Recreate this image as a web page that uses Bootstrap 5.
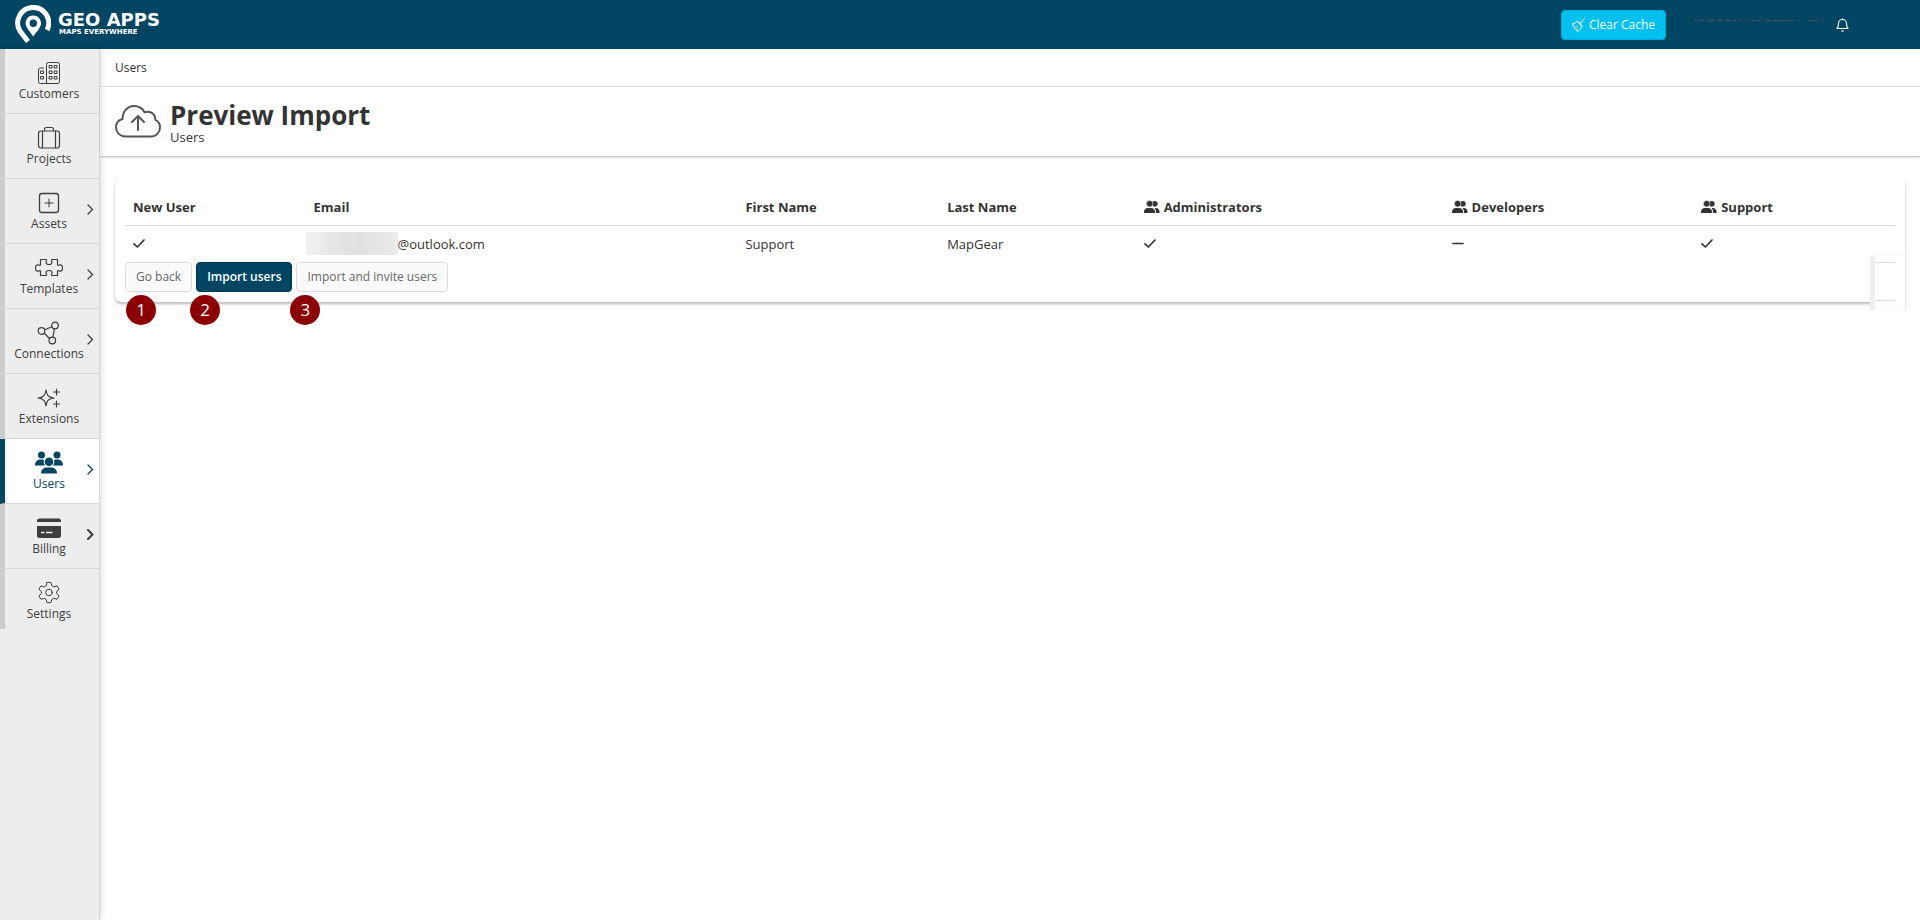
<!DOCTYPE html>
<html lang="en">
<head>
<meta charset="utf-8">
<meta name="viewport" content="width=device-width, initial-scale=1">
<title>Preview Import - Geo Apps</title>
<link href="https://cdn.jsdelivr.net/npm/bootstrap@5.3.0/dist/css/bootstrap.min.css" rel="stylesheet">
<style>
  body { font-family: "Open Sans", sans-serif; font-size: 13px; line-height: 18px; color: #333; background: #fff; }
  svg { display: block; flex: none; }
  .stroke { fill: none; stroke: currentColor; stroke-linecap: round; stroke-linejoin: round; }
  .topbar { height: 49px; background: #004663; color: #fff; padding: 0 71px 0 15px; }
  .brand-link { gap: 7px; }
  .brand-text { font-family: "DejaVu Sans", sans-serif; font-weight: 700; font-size: 18px; line-height: 17px; padding-bottom: 2px; }
  .brand-text small { display: block; font-size: 7px; line-height: 8px; padding-left: 1px; }
  .btn { font-size: 12px; line-height: 18px; padding: 5px 10px; border-radius: 4px; }
  .btn-cache { height: 30px; color: #fff; background: #00c0ef; border-color: #00acd6; font-weight: 500; }
  .btn-cache:hover { color: #fff; background: #00acd6; }
  .bell { color: #fff; padding: 0; border: 0; }
  .sidebar { width: 100px; background: #ededed; border-right: 1px solid #d6d6d6; box-shadow: 1px 0 6px rgba(0,0,0,.15); flex: none; }
  .side-link { height: 65px; border-left: 5px solid #ccc; border-bottom: 1px solid #d6d6d6; padding: 10px 6px 0 0; color: #3d3d3d; font-size: 12px; text-decoration: none; position: relative; }
  .side-link:last-child { border-bottom: 0; height: 60px; }
  .side-link.active { background: #fff; border-left-color: #004663; color: #004663; }
  .chev { position: absolute; right: 5px; top: 24px; }
  .page-shell { min-height: calc(100vh - 49px); }
  .crumbs { height: 38px; padding: 0 15px; border-bottom: 1px solid #dcdcdc; }
  .crumbs a { color: #333; text-decoration: none; font-size: 12px; }
  .page-head { height: 70px; padding: 0 15px; border-bottom: 1px solid #c4c4c4; box-shadow: 0 1px 2px rgba(0,0,0,.12); gap: 9px; }
  .page-head h1 { font-size: 26px; line-height: 30px; font-weight: 700; margin: 0; }
  .page-head p { font-size: 13px; line-height: 14px; margin: 0; }
  .import-panel { position: relative; margin: 20px 15px 0; padding: 12px 10px 10px; border-radius: 6px; background: #fff; box-shadow: 0 2px 3px rgba(0,0,0,.28); }
  .preview-table { table-layout: fixed; margin: 0; --bs-table-bg: transparent; color: #333; }
  .preview-table > thead th { height: 36px; padding: 0 8px; vertical-align: middle; font-weight: 700; border-bottom: 1px solid #d8d8d8; }
  .preview-table > tbody td { height: 37px; padding: 0 8px; vertical-align: middle; border: 0; color: #333; }
  .masked { width: 92px; height: 23px; margin-left: -8px; background: linear-gradient(90deg, #f2f2f2, #e3e3e3 35%, #e0e0e0 60%, #ececec); }
  .btn-plain { color: #666; background: #fafafa; border-color: #dcdcdc; }
  .btn-main { color: #fff; background: #004663; border-color: #00364d; font-weight: 600; }
  .btn-main:hover { color: #fff; background: #00364d; }
  .step { position: absolute; top: 33px; width: 30px; height: 30px; border-radius: 50%; background: #8b0000; color: #fff; font-size: 17px; line-height: 29px; text-align: center; z-index: 2; }
  .step-in { left: 1px; }
  .step-out { left: -6px; }
  .panel-edge { position: absolute; right: 0; top: 79px; width: 35px; height: 54px; background: #fff; border-left: 5px solid #eee; box-shadow: 1px 0 1px #e4e4e4; padding: 6px 10px 9px 0; }
  .panel-edge span { display: block; height: 39px; border: 1px solid #dcdcdc; border-width: 1px 0; }
</style>
</head>
<body>
<svg class="d-none" aria-hidden="true">
  <symbol id="people" viewBox="0 0 17 14"><g fill="currentColor"><circle cx="11.5" cy="3.6" r="3"/><circle cx="6" cy="3.5" r="3.5" stroke="#fff" stroke-width=".6"/><path d="M0 13.3V12c0-2.400 2-4 4-4h3.500c2.200 0 4.200 1.600 4.200 4v1.300zM11 8h1.500c2.400 0 4 1.700 4 4v1.300h-3.800V12c0-1.600-.6-3-1.700-4z"/></g></symbol>
  <symbol id="tick" viewBox="0 0 12 12"><path class="stroke" stroke-width="1.7" d="M1 5.800 4.300 9 11 2"/></symbol>
  <symbol id="arrow" viewBox="0 0 7 13"><path class="stroke" d="m1 2 4.500 4.500L1 11"/></symbol>
</svg>

<header class="topbar d-flex align-items-center">
  <a href="#" class="brand-link d-flex align-items-center text-white text-decoration-none me-auto" aria-label="Geo Apps">
    <svg width="36" height="40" viewBox="0 0 36 40"><path d="M13 36.500 5 26A15.500 15.500 0 1 1 32 25" fill="none" stroke="#fff" stroke-width="5"/><path fill="#fff" d="M18.300 10.500c-4.500 0-7.700 3.500-7.700 7.700 0 4.500 4.500 8.300 7.700 13.300 3.200-5 7.700-8.800 7.700-13.300 0-4.200-3.200-7.700-7.700-7.700zm0 4a3.700 3.700 0 1 1 0 7.400 3.700 3.700 0 0 1 0-7.400z"/></svg>
    <span class="brand-text">GEO APPS<small>MAPS EVERYWHERE</small></span>
  </a>
  <button type="button" class="btn btn-cache d-flex align-items-center gap-1">
    <svg width="13" height="14" viewBox="0 0 13 14"><path class="stroke" d="M12.500.7 8.700 4.700M5 3.200l5 5.200M5 3.200C3.700 4.900 2.300 5.600.7 5.700c.3 3.400 2.600 6.600 5.400 7.600 2-1.300 3.300-2.800 3.900-4.900M6.200 4.400c1-1.300 3.500.9 2.800 2.900M2.500 9.500 5 8.300M4.300 11.700l1.900-1.900"/></svg>
    Clear Cache
  </button>
  <svg class="ms-4 me-2" width="138" height="10" viewBox="0 0 138 10" aria-hidden="true"><path d="M4 .5h130" stroke="#5f4b5d" stroke-dasharray="5 2 2 6 5 3 6 3 5 3 2 4 2 9"/></svg>
  <button type="button" class="btn bell" aria-label="Notifications"><svg width="13" height="14" viewBox="0 0 13 14"><path class="stroke" stroke-width="1.100" d="M1 10.500h11c-1.500-1.300-1.500-2.500-1.500-5a4 4 0 0 0-8 0c0 2.500 0 3.700-1.500 5zM5.500 13h2M6.500 1.500V.7"/></svg></button>
</header>

<div class="page-shell d-flex">
  <nav class="sidebar" aria-label="Main">
    <a href="#" class="side-link d-flex flex-column align-items-center">
      <svg width="28" height="26" viewBox="0 0 28 26"><g class="stroke"><path d="M11.500 24.500V5.500q0-2 2-2h9q2 0 2 2v17q0 2-2 2h-17q-2 0-2-2V11q0-2 2-2h3"/><path d="M14.500 6.500h2.500V9h-2.500zM19.500 6.500H22V9h-2.500zM14.500 12h2.500v2.500h-2.500zM19.500 12H22v2.500h-2.500zM14.500 17.500h2.500V20h-2.500zM19.500 17.500H22V20h-2.500zM6 12h2.500v2.500H6zM6 17.500h2.500V20H6z"/></g></svg>Customers</a>
    <a href="#" class="side-link d-flex flex-column align-items-center">
      <svg width="28" height="26" viewBox="0 0 28 26"><path class="stroke" stroke-width="1.200" d="M6 7h16q2.500 0 2.500 2.500v12q0 2.500-2.500 2.500H6q-2.500 0-2.500-2.500v-12Q3.500 7 6 7zM7.500 7v17M20.500 7v17M9.500 7V5.500q0-2 2-2h5q2 0 2 2V7"/></svg>Projects</a>
    <a href="#" class="side-link d-flex flex-column align-items-center">
      <svg width="28" height="26" viewBox="0 0 28 26"><g class="stroke"><rect x="4.500" y="4.500" width="19" height="19" rx="2.500" stroke-width="1.300"/><path d="M14 10v8M10 14h8"/></g></svg>Assets<svg class="chev" width="7" height="13" stroke-width="1.300"><use href="#arrow"/></svg></a>
    <a href="#" class="side-link d-flex flex-column align-items-center">
      <svg width="28" height="26" viewBox="0 0 28 26"><path class="stroke" stroke-width="1.200" d="M5.500 5.500h5.300c1 0 1 1 .5 1.700-1 1.800.5 3.300 2.700 3.300s3.700-1.500 2.700-3.300c-.5-.7-.5-1.700.5-1.700h5.300v5c0 1 1 1.100 1.700.6 1.800-1 3.300.6 3.300 2.900s-1.500 3.900-3.300 2.900c-.7-.5-1.700-.4-1.700.6v4h-5.300c-1 0-1-1-.5-1.700 1-1.800-.5-3.300-2.700-3.300s-3.700 1.500-2.700 3.300c.5.700.5 1.700-.5 1.700H5.500v-4c0-1-1-1.100-1.700-.6C2 17.900.5 16.300.5 14s1.500-3.900 3.300-2.900c.7.500 1.700.4 1.700-.6z"/></svg>Templates<svg class="chev" width="7" height="13" stroke-width="1.300"><use href="#arrow"/></svg></a>
    <a href="#" class="side-link d-flex flex-column align-items-center">
      <svg width="28" height="26" viewBox="0 0 28 26"><g class="stroke" stroke-width="1.200"><circle cx="6.500" cy="12" r="3.300"/><circle cx="20" cy="6.500" r="3.300"/><circle cx="17.300" cy="21.500" r="3.300"/><path d="m9.700 10.700 7.200-2.900M9.200 14l5.300 5.500M19.400 9.900l-1.500 8.300"/></g></svg>Connections<svg class="chev" width="7" height="13" stroke-width="1.300"><use href="#arrow"/></svg></a>
    <a href="#" class="side-link d-flex flex-column align-items-center">
      <svg width="28" height="26" viewBox="0 0 28 26"><path class="stroke" stroke-width="1.200" d="M11 6q.9 5.200 2.600 6Q15 13.600 19 14q-4 .4-5.400 2-1.700.8-2.600 6-.9-5.200-2.600-6Q7 14.400 3 14q4-.4 5.400-2 1.700-.8 2.600-6zM21.500 5v6M18.500 8h6M21.500 17v6M18.500 20h6"/></svg>Extensions</a>
    <a href="#" class="side-link active d-flex flex-column align-items-center" aria-current="page">
      <svg width="28" height="26" viewBox="0 0 28 26"><g fill="currentColor"><circle cx="6.500" cy="6" r="3.500"/><circle cx="22" cy="6" r="3.500"/><path d="M0 16.500c0-3.500 2-6 5-6h3l1 1c-.8 2 0 3.800 1.300 5zM28 16.500c0-3.500-2-6-5-6h-3l-1 1c.8 2 0 3.800-1.300 5z"/><circle cx="14" cy="12.800" r="4.300"/><path d="M6 24.500c0-3.500 2.500-6 5.500-6h5c3 0 5.500 2.500 5.500 6z"/></g></svg>Users<svg class="chev" width="7" height="13" stroke-width="1.300"><use href="#arrow"/></svg></a>
    <a href="#" class="side-link d-flex flex-column align-items-center">
      <svg width="28" height="26" viewBox="0 0 28 26"><path fill="currentColor" d="M2 8V7q0-2.500 2.500-2.500h19Q26 4.500 26 7v1zM2 12h24v9.500q0 2.500-2.500 2.500h-19Q2 24 2 21.500z"/><path stroke="#ededed" stroke-width="1.300" d="M6 18.500h3.500M11 18.500h6.500"/></svg>Billing<svg class="chev" width="7" height="13" stroke-width="2"><use href="#arrow"/></svg></a>
    <a href="#" class="side-link d-flex flex-column align-items-center">
      <svg width="28" height="26" viewBox="0 0 28 26"><g class="stroke"><path d="M12 3.500q2-.6 4 0l.8 3.200 2 1.200 3.200-1q1.500 1.500 2 3.500l-2.400 2.100v2l2.400 2.300q-.5 2-2 3.500l-3.200-1-2 1.200-.8 3q-2 .6-4 0l-.8-3-2-1.200-3.200 1q-1.500-1.500-2-3.500l2.400-2.300v-2L4 10.400q.5-2 2-3.500l3.200 1 2-1.200z"/><circle cx="14" cy="13.500" r="3.300"/></g></svg>Settings</a>
  </nav>

  <main class="flex-grow-1">
    <nav class="crumbs d-flex align-items-center" aria-label="Breadcrumb"><a href="#">Users</a></nav>
    <div class="page-head d-flex align-items-center">
      <svg width="46" height="34" viewBox="0 0 46 34" color="#555"><path class="stroke" stroke-width="2" d="M10.500 31.500C5 31.500 1 27.500 1 22.500c0-4.300 2.500-7.500 6.500-8.500C7.500 6.500 12.500 1 19 1c5 0 8.500 2.300 10.500 6.200 5-1.800 11 1.300 10.800 7.600 3 1.300 4.700 4.200 4.700 7.700 0 5-4 9-8.500 9zM23 25V11M17 17l6-6 6 6"/></svg>
      <div><h1>Preview Import</h1><p>Users</p></div>
    </div>

    <section class="import-panel">
      <table class="table preview-table">
        <colgroup><col style="width:10.2%"><col style="width:24.4%"><col style="width:11.400%"><col style="width:11.100%"><col style="width:17.400%"><col style="width:14.100%"><col style="width:11.400%"></colgroup>
        <thead><tr>
          <th scope="col">New User</th><th scope="col">Email</th><th scope="col">First Name</th><th scope="col">Last Name</th>
          <th scope="col"><div class="d-flex align-items-center"><svg class="me-1" width="16" height="14"><use href="#people"/></svg>Administrators</div></th>
          <th scope="col"><div class="d-flex align-items-center"><svg class="me-1" width="16" height="14"><use href="#people"/></svg>Developers</div></th>
          <th scope="col"><div class="d-flex align-items-center"><svg class="me-1" width="16" height="14"><use href="#people"/></svg>Support</div></th>
        </tr></thead>
        <tbody><tr>
          <td><svg width="12" height="12" role="img" aria-label="Yes"><use href="#tick"/></svg></td>
          <td><div class="d-flex align-items-center"><span class="masked"></span>@outlook.com</div></td>
          <td>Support</td><td>MapGear</td>
          <td><svg width="12" height="12" role="img" aria-label="Yes"><use href="#tick"/></svg></td>
          <td><svg width="12" height="12" role="img" aria-label="No"><path class="stroke" stroke-width="1.700" d="M1 5.500h10"/></svg></td>
          <td><svg width="12" height="12" role="img" aria-label="Yes"><use href="#tick"/></svg></td>
        </tr></tbody>
      </table>
      <div class="d-flex gap-1">
        <div class="position-relative"><button type="button" class="btn btn-plain">Go back</button><span class="step step-in">1</span></div>
        <div class="position-relative"><button type="button" class="btn btn-main">Import users</button><span class="step step-out">2</span></div>
        <div class="position-relative"><button type="button" class="btn btn-plain">Import and invite users</button><span class="step step-out">3</span></div>
      </div>
      <div class="panel-edge"><span></span></div>
    </section>
  </main>
</div>
<script src="https://cdn.jsdelivr.net/npm/bootstrap@5.3.0/dist/js/bootstrap.bundle.min.js"></script>
</body>
</html>
